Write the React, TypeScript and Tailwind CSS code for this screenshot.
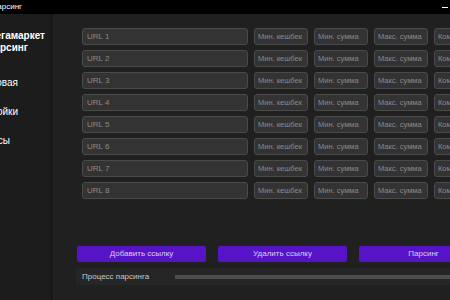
const ROWS = [1, 2, 3, 4, 5, 6, 7, 8];
const FIELDS = ['Мин. кешбек', 'Мин. сумма', 'Макс. сумма', 'Комиссия'];

// the window is wider than the viewport, left part is off-screen
function Clipped({ w, children, className }: { w: string; children: string; className: string }) {
  return (
    <div className={`flex justify-end whitespace-nowrap ${w} ${className}`}>
      <span>{children}</span>
    </div>
  );
}

export default function App() {
  return (
    <div
      className="w-[450px] h-[300px] overflow-hidden bg-black flex flex-col"
      style={{ fontFamily: '"Liberation Sans", Arial, sans-serif' }}
    >
      {/* Title bar */}
      <div className="h-[14px] shrink-0 flex items-center justify-between">
        <Clipped w="w-[22px]" className="text-[8px] leading-none text-white">
          Мегамаркет парсинг
        </Clipped>
        <div className="w-[6px] h-px bg-white mr-[2px]" />
      </div>

      <div className="flex flex-1 min-h-0">
        {/* Sidebar */}
        <div className="w-[53px] shrink-0 bg-[#1c1c1c] border-r-[3px] border-[#181818] overflow-hidden pt-[16px] text-white">
          <Clipped w="w-[45px]" className="text-[10px] font-bold leading-[12px]">Мегамаркет</Clipped>
          <Clipped w="w-[28px]" className="text-[10px] font-bold leading-[12px]">парсинг</Clipped>
          <div className="mt-[14px] flex flex-col text-[10px] font-medium">
            <Clipped w="w-[18px]" className="h-[29px] items-center">Новая</Clipped>
            <Clipped w="w-[18px]" className="h-[29px] items-center">Настройки</Clipped>
            <Clipped w="w-[10px]" className="h-[29px] items-center">Процессы</Clipped>
          </div>
        </div>

        {/* Main */}
        <div className="flex-1 min-w-0 bg-[#202020] overflow-hidden flex flex-col pt-[14px] pb-[15px]">
          <div className="flex flex-col gap-[5px] pl-[29px]">
            {ROWS.map((n) => (
              <div key={n} className="flex gap-[6px] shrink-0">
                <div className="w-[166px] h-[17px] shrink-0 rounded-[3px] border border-[#4a4a4a] bg-[#333333] pl-[4px] flex items-center text-[8px] text-[#8a8a8a]">
                  URL {n}
                </div>
                {FIELDS.map((f) => (
                  <div
                    key={f}
                    className="w-[54px] h-[17px] shrink-0 rounded-[3px] border border-[#4a4a4a] bg-[#333333] pl-[3px] flex items-center whitespace-nowrap overflow-hidden text-[7.5px] text-[#8a8a8a]"
                  >
                    {f}
                  </div>
                ))}
              </div>
            ))}
          </div>

          <div className="mt-auto pl-[24px] flex gap-[12px]">
            {['Добавить ссылку', 'Удалить ссылку', 'Парсинг'].map((b) => (
              <div
                key={b}
                className="w-[129px] h-[16px] shrink-0 rounded-[2px] bg-[#5614c6] flex items-center justify-center text-[8px] text-[#dcd0f8]"
              >
                {b}
              </div>
            ))}
          </div>

          <div className="mt-[6px] ml-[23px] h-[17px] bg-[#262626] flex items-center">
            <span className="pl-[6px] w-[99px] shrink-0 text-[8px] text-[#c8c8c8] whitespace-nowrap">Процесс парсинга</span>
            <div className="flex-1 h-[4px] bg-[#4d4d4d]" />
          </div>
        </div>
      </div>
    </div>
  );
}
